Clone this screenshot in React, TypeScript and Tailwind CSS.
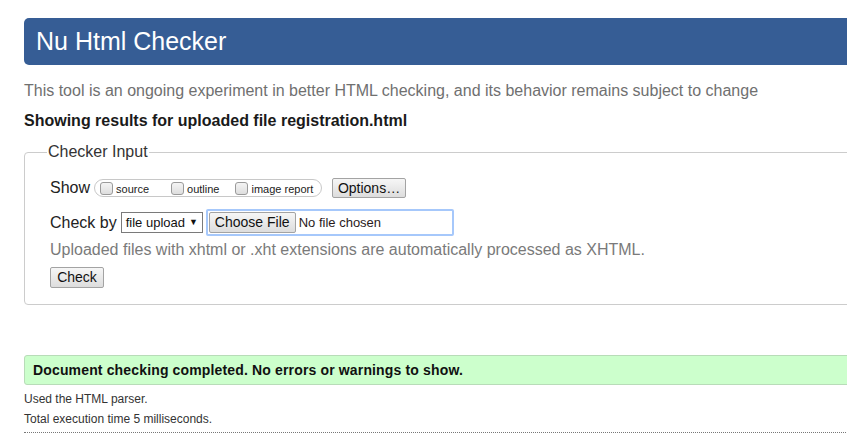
const font = { fontFamily: '"Liberation Sans", Arial, sans-serif' };

function FakeCheckbox() {
  return (
    <span className="inline-block w-[13px] h-[13px] rounded-[3px] border border-[#9a9a9a] bg-gradient-to-b from-[#f4f4f4] to-[#dedede]" />
  );
}

function GrayButton({ label, className }: { label: string; className: string }) {
  return (
    <span
      className={`inline-flex items-center justify-center rounded-[2px] border border-[#a3a3a3] bg-gradient-to-b from-[#f6f6f6] to-[#dddddd] text-[#111] ${className}`}
    >
      {label}
    </span>
  );
}

export default function App() {
  return (
    <div className="w-[847px] h-[441px] overflow-hidden bg-white text-[#222]" style={font}>
      <div className="ml-[24px] w-[900px]">
        <div className="mt-[18px] h-[47px] rounded-l-[5px] bg-[#365d95] flex items-center pl-[12px]">
          <h1 className="text-[25px] leading-none text-white">Nu Html Checker</h1>
        </div>

        <p className="mt-[16px] text-[16px] leading-[20px] text-[#707070]">
          This tool is an ongoing experiment in better HTML checking, and its behavior remains subject to change
        </p>
        <p className="mt-[10px] text-[16px] leading-[20px] font-bold text-[#1a1a1a]">
          Showing results for uploaded file registration.html
        </p>

        <fieldset className="mt-[11px] w-[880px] h-[163px] rounded-[4px] border border-[#cccccc] px-[25px]">
          <legend className="ml-[-3px] px-[1px] text-[16px] leading-[20px] text-[#333]">Checker Input</legend>

          <div className="mt-[16px] flex items-center h-[20px]">
            <span className="text-[16px] text-[#222]">Show</span>
            <div className="ml-[4px] h-[18px] w-[228px] rounded-full border border-[#c8c8c8] flex items-center pl-[5px] text-[11px] text-[#222]">
              <span className="flex items-center gap-[3px]">
                <FakeCheckbox />
                <span className="mt-[2px]">source</span>
              </span>
              <span className="ml-[22px] flex items-center gap-[3px]">
                <FakeCheckbox />
                <span className="mt-[2px]">outline</span>
              </span>
              <span className="ml-[16px] flex items-center gap-[3px]">
                <FakeCheckbox />
                <span className="mt-[2px]">image report</span>
              </span>
            </div>
            <GrayButton label="Options…" className="ml-[10px] w-[74px] h-[20px] text-[14px]" />
          </div>

          <div className="mt-[11px] flex items-center h-[27px]">
            <span className="text-[16px] text-[#222]">Check by</span>
            <span className="ml-[4px] h-[21px] w-[82px] border border-[#7a7a7a] flex items-center pl-[4px] text-[13px] text-[#111]">
              file upload
              <span className="ml-[4px] text-[9px]">▼</span>
            </span>
            <div className="ml-[3px] h-[27px] w-[248px] rounded-[2px] border-2 border-[#a6c8fb] flex items-center pl-[1px]">
              <GrayButton label="Choose File" className="w-[87px] h-[21px] text-[14px]" />
              <span className="ml-[3px] text-[13px] text-[#2a1a1a]">No file chosen</span>
            </div>
          </div>

          <p className="mt-[4px] text-[16px] leading-[20px] text-[#7a7a7a]">
            Uploaded files with xhtml or .xht extensions are automatically processed as XHTML.
          </p>

          <GrayButton label="Check" className="mt-[7px] w-[54px] h-[21px] text-[14px]" />
        </fieldset>

        <div className="mt-[50px] h-[30px] w-[880px] rounded-l-[3px] border border-[#b8dcb8] bg-[#ccffcc] flex items-center pl-[8px]">
          <span className="text-[14px] font-bold tracking-[0.15px] text-[#111]">
            Document checking completed. No errors or warnings to show.
          </span>
        </div>

        <p className="mt-[4px] text-[12px] leading-[20px] text-[#333]">Used the HTML parser.</p>
        <p className="text-[12px] leading-[20px] text-[#333]">Total execution time 5 milliseconds.</p>
        <div className="mt-[3px] border-t border-dotted border-[#777]" />
      </div>
    </div>
  );
}
